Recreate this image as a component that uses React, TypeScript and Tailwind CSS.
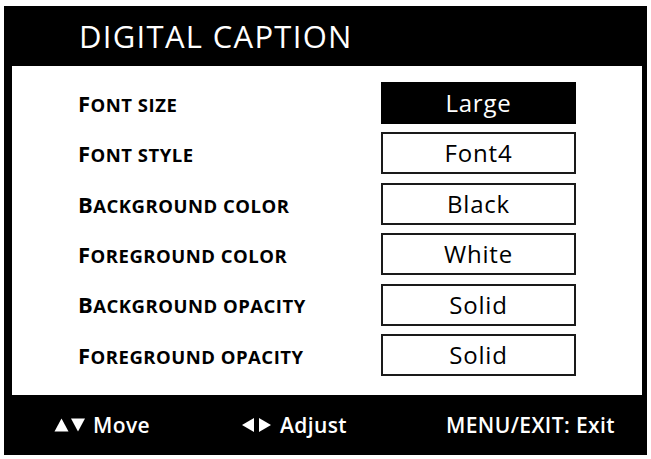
const ROWS = [
  { label: "Font size", value: "Large", active: true },
  { label: "Font style", value: "Font4" },
  { label: "Background color", value: "Black" },
  { label: "Foreground color", value: "White" },
  { label: "Background opacity", value: "Solid" },
  { label: "Foreground opacity", value: "Solid" },
];

function SmallCaps({ text }: { text: string }) {
  const upper = text.toUpperCase();
  return (
    <span className="font-bold text-black leading-none tracking-[0.5px]">
      <span className="text-[22px]">{upper[0]}</span>
      <span className="text-[18.5px]">{upper.slice(1)}</span>
    </span>
  );
}

function Arrows({ dir }: { dir: "v" | "h" }) {
  return (
    <svg width="32" height="14" viewBox="0 0 32 14" className="shrink-0">
      {dir === "v" ? (
        <>
          <polygon points="7.5,0.5 14.5,13.5 0.5,13.5" fill="white" />
          <polygon points="17,0.5 31,0.5 24,13.5" fill="white" />
        </>
      ) : (
        <>
          <polygon points="1,7 13,0 13,14" fill="white" />
          <polygon points="18,0 30,7 18,14" fill="white" />
        </>
      )}
    </svg>
  );
}

export default function App() {
  return (
    <div
      className="w-[651px] h-[459px] bg-white pt-[6px] pl-[4px]"
      style={{ fontFamily: '"Open Sans", "Noto Sans", sans-serif' }}
    >
      <div className="w-[643px] h-[449px] bg-black flex flex-col pl-[8px] pr-[5px]">
        <div className="h-[60px] flex items-center pl-[67px]">
          <span className="text-white text-[31px] font-medium leading-none tracking-[1.3px]">
            DIGITAL CAPTION
          </span>
        </div>
        <div className="h-[329px] bg-white pt-[16px] pl-[66px] pr-[66px] flex flex-col gap-[8.4px]">
          {ROWS.map((r) => (
            <div key={r.label} className="flex items-center justify-between h-[42px]">
              <SmallCaps text={r.label} />
              <div
                className={`w-[195px] h-[42px] flex items-center justify-center text-[24px] font-medium leading-none tracking-[0.8px] ${
                  r.active
                    ? "bg-black text-white"
                    : "bg-white text-black border-2 border-[#1a1a1a]"
                }`}
              >
                {r.value}
              </div>
            </div>
          ))}
        </div>
        <div className="h-[60px] flex items-center justify-between pl-[42px] pr-[27px] text-white text-[21px] font-semibold leading-none tracking-[0.4px]">
          <div className="flex items-center gap-[7px]">
            <Arrows dir="v" />
            <span>Move</span>
          </div>
          <div className="flex items-center gap-[7px] -ml-[8px]">
            <Arrows dir="h" />
            <span>Adjust</span>
          </div>
          <span>MENU/EXIT: Exit</span>
        </div>
      </div>
    </div>
  );
}
